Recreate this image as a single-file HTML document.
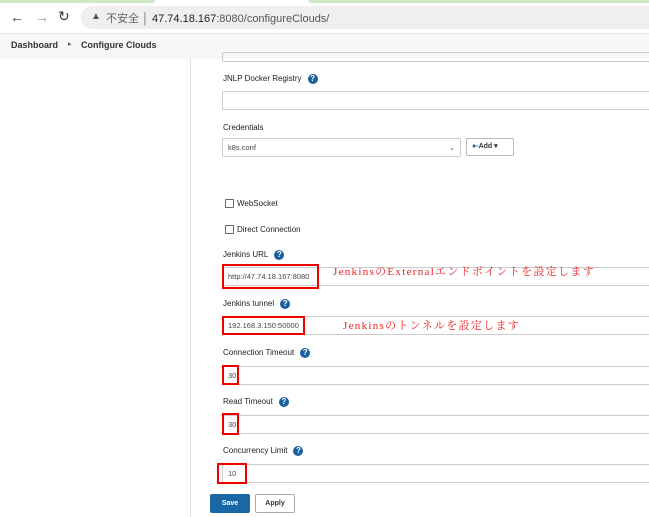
<!DOCTYPE html><html><head><style>
body{margin:0;width:649px;height:517px;overflow:hidden;background:#fff;font-family:"Liberation Sans",sans-serif;position:relative}
.a{position:absolute}
.lbl{position:absolute;left:223px;font-size:8px;color:#222}
.q{display:inline-block;width:10px;height:10px;border-radius:50%;background:#1a5fa0;color:#fff;font-size:8px;font-weight:bold;text-align:center;line-height:10px;margin-left:6px;vertical-align:middle}
.in{position:absolute;left:222px;width:440px;height:19px;border:1px solid #ccc;border-radius:2px;box-sizing:border-box;font-size:7.5px;color:#444;padding-left:5px;line-height:18px}
.red{position:absolute;border:2px solid #e00;box-sizing:border-box}
.ann{position:absolute;color:#e22;font-family:"Liberation Serif","Noto Serif CJK SC",serif;font-size:11px;letter-spacing:1.3px}
.cb{position:absolute;left:225px;width:7px;height:7px;border:1px solid #666;border-radius:1px}
</style></head><body>
<div class="a" style="left:0;top:0;width:649px;height:33px;background:#fff"></div>
<div class="a" style="left:0;top:0;width:155px;height:3px;background:#cfe8c4;border-radius:0 0 6px 0"></div>
<div class="a" style="left:308px;top:0;width:341px;height:3px;background:#cfe8c4;border-radius:0 0 0 6px"></div>
<div class="a" style="left:10px;top:9px;font-size:14px;color:#333">&#8592;</div>
<div class="a" style="left:35px;top:9px;font-size:14px;color:#999">&#8594;</div>
<div class="a" style="left:58px;top:8px;font-size:14px;color:#333">&#8635;</div>
<div class="a" style="left:81px;top:6px;width:580px;height:23px;background:#efefef;border-radius:12px"></div>
<div class="a" style="left:91px;top:11px;font-size:10px;color:#555">&#9650;</div>
<div class="a" style="left:106px;top:10px;font-size:11px;color:#666;font-family:'Liberation Sans','Noto Sans CJK SC',sans-serif">不安全 │ <span style="color:#222">47.74.18.167</span><span style="color:#555">:8080/configureClouds/</span></div>
<div class="a" style="left:0;top:33px;width:649px;height:25px;background:#f7f7f7;border-top:1px solid #e4e4e4"></div>
<div class="a" style="left:11px;top:40px;font-size:9px;font-weight:bold;color:#333">Dashboard</div>
<div class="a" style="left:68px;top:40px;font-size:7px;color:#555">&#9656;</div>
<div class="a" style="left:81px;top:40px;font-size:9px;font-weight:bold;color:#333">Configure Clouds</div>
<div class="a" style="left:190px;top:58px;width:1px;height:459px;background:#e2e2e2"></div>
<div class="in" style="top:52px;height:10px"></div>
<div class="lbl" style="top:74px">JNLP Docker Registry<span class="q">?</span></div>
<div class="in" style="top:91px"></div>
<div class="lbl" style="top:123px">Credentials</div>
<div class="in" style="top:138px;width:239px">k8s.conf<span style="position:absolute;right:5px;color:#555">&#8964;</span></div>
<div class="a" style="left:466px;top:138px;width:48px;height:18px;border:1px solid #bbb;border-radius:2px;box-sizing:border-box;font-size:7px;font-weight:bold;color:#333;line-height:16px;padding-left:5px"><span style="color:#1a5fa0">&#9679;-</span>Add &#9662;</div>
<div class="cb" style="top:199px"></div><div class="lbl" style="left:237px;top:199px">WebSocket</div>
<div class="cb" style="top:225px"></div><div class="lbl" style="left:237px;top:225px">Direct Connection</div>
<div class="lbl" style="top:250px">Jenkins URL<span class="q">?</span></div>
<div class="in" style="top:267px">http://47.74.18.167:8080</div>
<div class="red" style="left:222px;top:264px;width:97px;height:25px"></div>
<div class="ann" style="left:333px;top:263px">JenkinsのExternalエンドポイントを設定します</div>
<div class="lbl" style="top:299px">Jenkins tunnel<span class="q">?</span></div>
<div class="in" style="top:316px">192.168.3.150:50000</div>
<div class="red" style="left:222px;top:316px;width:83px;height:19px"></div>
<div class="ann" style="left:343px;top:317px">Jenkinsのトンネルを設定します</div>
<div class="lbl" style="top:348px">Connection Timeout<span class="q">?</span></div>
<div class="in" style="top:366px">30</div>
<div class="red" style="left:222px;top:365px;width:17px;height:20px"></div>
<div class="lbl" style="top:397px">Read Timeout<span class="q">?</span></div>
<div class="in" style="top:415px">30</div>
<div class="red" style="left:222px;top:413px;width:17px;height:22px"></div>
<div class="lbl" style="top:446px">Concurrency Limit<span class="q">?</span></div>
<div class="in" style="top:464px">10</div>
<div class="red" style="left:217px;top:463px;width:30px;height:21px"></div>
<div class="a" style="left:210px;top:494px;width:40px;height:19px;background:#1b68a6;border-radius:2px;color:#fff;font-size:7px;font-weight:bold;text-align:center;line-height:19px">Save</div>
<div class="a" style="left:255px;top:494px;width:40px;height:19px;border:1px solid #aaa;box-sizing:border-box;border-radius:2px;color:#333;font-size:7px;font-weight:bold;text-align:center;line-height:17px">Apply</div>
</body></html>
